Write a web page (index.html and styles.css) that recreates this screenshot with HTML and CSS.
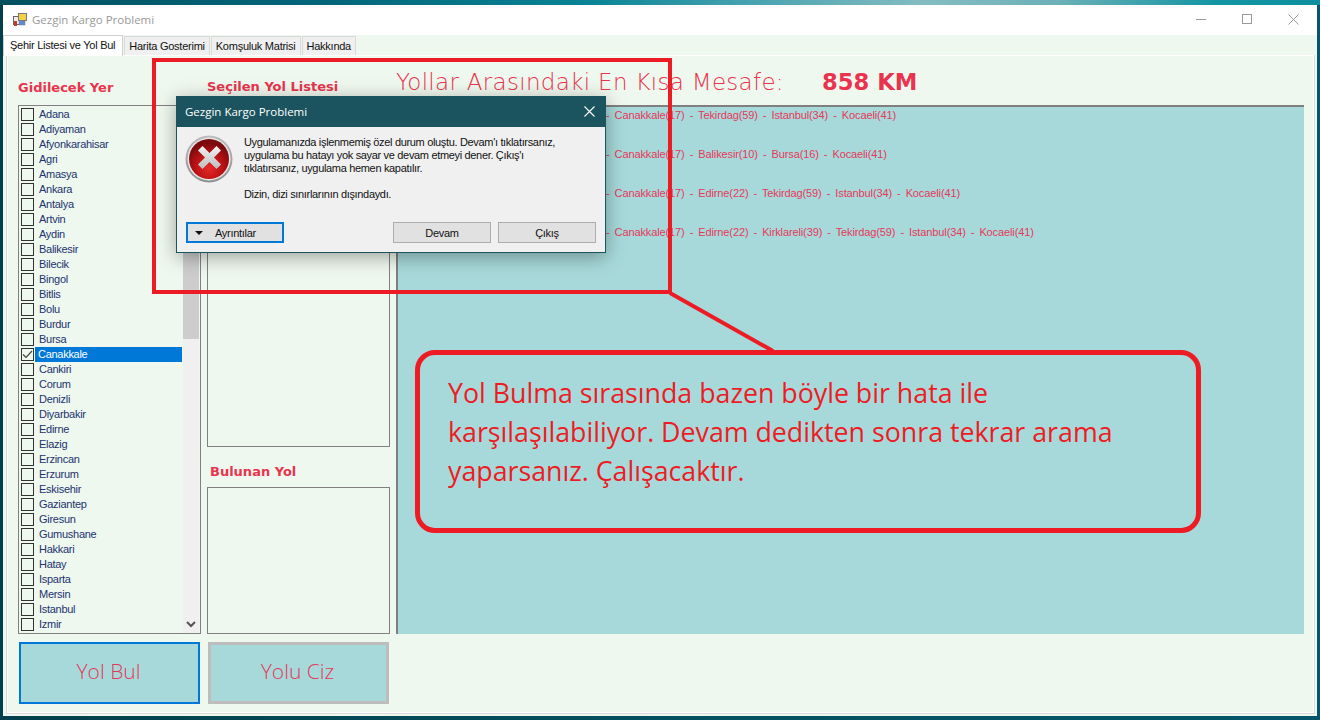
FILE: index.html
```html
<!DOCTYPE html>
<html lang="tr">
<head>
<meta charset="utf-8">
<title>Gezgin Kargo Problemi</title>
<link rel="stylesheet" href="styles.css">
</head>
<body>
<div class="desktop">
  <div class="window">
    <div class="titlebar">
      <svg class="appicon" width="14" height="14" viewBox="0 0 14 14"><rect x="0.5" y="3.5" width="7" height="8" fill="#eee" stroke="#666"/><rect x="5.5" y="0.5" width="8" height="7" fill="#f3d24a" stroke="#777"/><rect x="1" y="8" width="3" height="5" fill="#c8372d"/><rect x="6" y="8" width="6" height="4" fill="#5b8ed8" stroke="#777" stroke-width="0.5"/></svg>
      <span class="wintitle">Gezgin Kargo Problemi</span>
      <div class="controls">
        <svg width="11" height="11" viewBox="0 0 11 11"><path d="M0 5.5H10" stroke="#999" fill="none"/></svg>
        <svg width="11" height="11" viewBox="0 0 11 11"><rect x="0.5" y="0.5" width="9" height="9" stroke="#999" fill="none"/></svg>
        <svg width="11" height="11" viewBox="0 0 11 11"><path d="M0.5 0.5L10.5 10.5M10.5 0.5L0.5 10.5" stroke="#999" fill="none"/></svg>
      </div>
    </div>
    <div class="tabs">
      <div class="tab active">Şehir Listesi ve Yol Bul</div>
      <div class="tab">Harita Gosterimi</div>
      <div class="tab">Komşuluk Matrisi</div>
      <div class="tab">Hakkında</div>
    </div>
    <div class="panel">
      <div class="col col-left">
        <div class="heading">Gidilecek Yer</div>
        <div class="citybox">
          <ul class="cities">
            <li><i class="cb"></i><span>Adana</span></li>
            <li><i class="cb"></i><span>Adiyaman</span></li>
            <li><i class="cb"></i><span>Afyonkarahisar</span></li>
            <li><i class="cb"></i><span>Agri</span></li>
            <li><i class="cb"></i><span>Amasya</span></li>
            <li><i class="cb"></i><span>Ankara</span></li>
            <li><i class="cb"></i><span>Antalya</span></li>
            <li><i class="cb"></i><span>Artvin</span></li>
            <li><i class="cb"></i><span>Aydin</span></li>
            <li><i class="cb"></i><span>Balikesir</span></li>
            <li><i class="cb"></i><span>Bilecik</span></li>
            <li><i class="cb"></i><span>Bingol</span></li>
            <li><i class="cb"></i><span>Bitlis</span></li>
            <li><i class="cb"></i><span>Bolu</span></li>
            <li><i class="cb"></i><span>Burdur</span></li>
            <li><i class="cb"></i><span>Bursa</span></li>
            <li class="selected"><i class="cb"><svg width="11" height="11" viewBox="0 0 11 11"><path d="M1 5.5L4 8.5L10 2" stroke="#444" stroke-width="1.2" fill="none"/></svg></i><span>Canakkale</span></li>
            <li><i class="cb"></i><span>Cankiri</span></li>
            <li><i class="cb"></i><span>Corum</span></li>
            <li><i class="cb"></i><span>Denizli</span></li>
            <li><i class="cb"></i><span>Diyarbakir</span></li>
            <li><i class="cb"></i><span>Edirne</span></li>
            <li><i class="cb"></i><span>Elazig</span></li>
            <li><i class="cb"></i><span>Erzincan</span></li>
            <li><i class="cb"></i><span>Erzurum</span></li>
            <li><i class="cb"></i><span>Eskisehir</span></li>
            <li><i class="cb"></i><span>Gaziantep</span></li>
            <li><i class="cb"></i><span>Giresun</span></li>
            <li><i class="cb"></i><span>Gumushane</span></li>
            <li><i class="cb"></i><span>Hakkari</span></li>
            <li><i class="cb"></i><span>Hatay</span></li>
            <li><i class="cb"></i><span>Isparta</span></li>
            <li><i class="cb"></i><span>Mersin</span></li>
            <li><i class="cb"></i><span>Istanbul</span></li>
            <li><i class="cb"></i><span>Izmir</span></li>
          </ul>
          <div class="scrollbar">
            <div class="thumb"></div>
            <svg class="arrow" width="10" height="7" viewBox="0 0 10 7"><path d="M1 1L5 5L9 1" stroke="#555" stroke-width="2" fill="none"/></svg>
          </div>
        </div>
        <button class="bigbtn focus">Yol Bul</button>
      </div>
      <div class="col col-mid">
        <div class="heading">Seçilen Yol Listesi</div>
        <div class="box box-top"></div>
        <div class="heading heading-found">Bulunan Yol</div>
        <div class="box box-bottom"></div>
        <button class="bigbtn plain">Yolu Ciz</button>
      </div>
      <div class="col col-right">
        <div class="summary">
          <span class="sumlabel">Yollar Arasındaki En Kısa Mesafe:</span>
          <span class="sumvalue">858 KM</span>
        </div>
        <div class="results">
          <div class="route">-&nbsp; Canakkale(17) &nbsp;-&nbsp; Tekirdag(59) &nbsp;-&nbsp; Istanbul(34) &nbsp;-&nbsp; Kocaeli(41)</div>
          <div class="route">-&nbsp; Canakkale(17) &nbsp;-&nbsp; Balikesir(10) &nbsp;-&nbsp; Bursa(16) &nbsp;-&nbsp; Kocaeli(41)</div>
          <div class="route">-&nbsp; Canakkale(17) &nbsp;-&nbsp; Edirne(22) &nbsp;-&nbsp; Tekirdag(59) &nbsp;-&nbsp; Istanbul(34) &nbsp;-&nbsp; Kocaeli(41)</div>
          <div class="route">-&nbsp; Canakkale(17) &nbsp;-&nbsp; Edirne(22) &nbsp;-&nbsp; Kirklareli(39) &nbsp;-&nbsp; Tekirdag(59) &nbsp;-&nbsp; Istanbul(34) &nbsp;-&nbsp; Kocaeli(41)</div>
        </div>
      </div>
    </div>
  </div>

  <div class="dialog">
    <div class="dlgtitle">
      <span>Gezgin Kargo Problemi</span>
      <svg width="11" height="11" viewBox="0 0 11 11"><path d="M0.5 0.5L10.5 10.5M10.5 0.5L0.5 10.5" stroke="#fff" stroke-width="1.1" fill="none"/></svg>
    </div>
    <div class="dlgbody">
      <div class="dlgmain">
        <svg class="erricon" width="48" height="48" viewBox="0 0 48 48">
          <defs>
            <radialGradient id="red" cx="50%" cy="72%" r="62%"><stop offset="0" stop-color="#e62a28"/><stop offset="0.55" stop-color="#bb1214"/><stop offset="1" stop-color="#7a0b0e"/></radialGradient>
            <linearGradient id="ring" x1="0" y1="0" x2="0" y2="1"><stop offset="0" stop-color="#bdbdbd"/><stop offset="1" stop-color="#8f8f8f"/></linearGradient>
            <linearGradient id="xg" x1="0" y1="0" x2="0" y2="1"><stop offset="0" stop-color="#f2f2f2"/><stop offset="1" stop-color="#bdbdbd"/></linearGradient>
          </defs>
          <circle cx="24" cy="24" r="23.5" fill="url(#ring)"/>
          <circle cx="24" cy="24" r="21.5" fill="#e6e6e6"/>
          <circle cx="24" cy="24" r="20" fill="url(#red)"/>
          <path d="M17.500 11L24.500 18L31.500 11L36 15.500L29 22.500L36 29.500L31.500 34L24.500 27L17.500 34L13 29.500L20 22.500L13 15.500Z" fill="url(#xg)"/>
        </svg>
        <div class="dlgtext">
          <p>Uygulamanızda işlenmemiş özel durum oluştu. Devam'ı tıklatırsanız,<br>uygulama bu hatayı yok sayar ve devam etmeyi dener. Çıkış'ı<br>tıklatırsanız, uygulama hemen kapatılır.</p>
          <p>Dizin, dizi sınırlarının dışındaydı.</p>
        </div>
      </div>
      <div class="dlgbtns">
        <button class="dbtn details"><i class="tri"></i>Ayrıntılar</button>
        <span class="spacer"></span>
        <button class="dbtn">Devam</button>
        <button class="dbtn">Çıkış</button>
      </div>
    </div>
  </div>

  <svg class="marks" width="1320" height="720" viewBox="0 0 1320 720">
    <rect x="154" y="60" width="516" height="232" fill="none" stroke="#ed1c24" stroke-width="4"/>
    <path d="M670 293L773 351" stroke="#ed1c24" stroke-width="4" fill="none"/>
  </svg>

  <div class="note">Yol Bulma sırasında bazen böyle bir hata ile karşılaşılabiliyor. Devam dedikten sonra tekrar arama yaparsanız. Çalışacaktır.</div>
</div>
</body>
</html>
```

FILE: styles.css
```css
* { box-sizing: border-box; }
html, body { margin: 0; padding: 0; }
body { width: 1320px; height: 720px; overflow: hidden; font-family: "Liberation Sans", Arial, sans-serif; }
p { margin: 0; }

.desktop {
  position: relative;
  width: 1320px;
  height: 720px;
  padding: 5px 3px 4px;
  background:
    linear-gradient(90deg, #03505f 0%, #04657a 25%, #0a8496 45%, #3f9eac 55%, #85bcc3 70%, #6db0b8 80%, #1495a3 92%, #0d8fa0 100%) top / 100% 5px no-repeat,
    linear-gradient(90deg, #023f4c 0%, #04505e 50%, #05566b 100%);
}
.window { display: flex; flex-direction: column; height: 100%; background: #eff8ee; }

.titlebar { display: flex; align-items: center; height: 30px; padding: 0 0 1px 10px; background: #fff; flex: none; }
.appicon { flex: none; }
.wintitle { margin-left: 5px; font: 11.5px "Open Sans", sans-serif; color: #999; }
.controls { margin-left: auto; display: flex; align-items: center; gap: 35px; padding-right: 18px; }

.tabs { display: flex; align-items: flex-end; height: 20px; flex: none; background: #eff8ee; position: relative; z-index: 1; }
.tab { height: 19px; padding: 0 4px; margin-left: 1px; font-size: 11px; letter-spacing: -0.25px; line-height: 18px; color: #111; background: #f0f0f0; border: 1px solid #d9d9d9; border-bottom: 0; white-space: nowrap; }
.tab.active { height: 21px; margin-left: 0; margin-bottom: -1px; padding: 0 7px 0 6px; background: #fff; border-color: #d0d0d0; line-height: 19px; }

.panel {
  flex: 1;
  display: grid;
  grid-template-columns: 183px 183px 908px;
  column-gap: 6px;
  margin: 0 3px 3px 4px;
  padding: 0 9px 0 10px;
  border: 1px solid #fff;
  outline: 1px solid #d9d9d9;
  background: #eff8ee;
  min-height: 0;
}
.col { display: flex; flex-direction: column; min-height: 0; }

.heading { height: 49px; padding-top: 23px; font: bold 13px/18px "DejaVu Sans", sans-serif; color: #e8344e; }
.col-mid .heading { padding: 22px 0 0; }
.col-mid .heading-found { height: 40px; padding: 16px 0 0 3px; }

.citybox { display: flex; height: 529px; border: 1px solid #808080; background: #eff8ee; flex: none; }
.cities { list-style: none; margin: 0; padding: 1px 0 0 2px; flex: 1; min-width: 0; }
.cities li { display: flex; align-items: center; height: 15px; font-size: 11px; letter-spacing: -0.28px; color: #22336f; }
.cb { display: flex; width: 13px; height: 13px; flex: none; border: 1px solid #333; margin-right: 1px; align-items: center; justify-content: center; }
.cb svg { flex: none; }
.cities li span { display: block; flex: 1; padding-left: 4px; margin-right: 1px; line-height: 15px; }
.cities li.selected span { padding-left: 3px; background: #0078d7; color: #fff; }

.scrollbar { position: relative; width: 16px; margin-right: 1px; background: #f0f0f0; flex: none; }
.thumb { height: 217px; margin-top: 16px; background: #cdcdcd; }
.arrow { position: absolute; left: 3px; bottom: 5px; }

.bigbtn { display: block; height: 62px; margin-top: 8px; flex: none; padding: 0 2px 4px 0; font: 300 21px "Open Sans", sans-serif; color: #e23a5a; background: #a8d9da; width: 181px; margin-left: 1px; }
.bigbtn.focus { border: 2px solid #0078d7; }
.bigbtn.plain { border: 3px solid #bdbdbd; }

.box { border: 1px solid #808080; background: #eff8ee; flex: none; }
.box-top { height: 342px; }
.box-bottom { height: 147px; }

.summary { display: flex; align-items: baseline; height: 49px; padding-top: 13px; color: #e8344e; }
.sumlabel { font: 200 23px "DejaVu Sans", sans-serif; letter-spacing: 0.3px; white-space: nowrap; }
.sumvalue { font: bold 22.7px "DejaVu Sans", sans-serif; margin-left: 38px; white-space: nowrap; }

.results { height: 529px; background: #a8d9da; border-top: 2px solid #7f7f7f; border-left: 2px solid #7f7f7f; padding: 1px 0 0 208px; }
.route { height: 39px; line-height: 15px; font-size: 11px; letter-spacing: -0.12px; word-spacing: -0.4px; color: #e23a5a; white-space: pre; }

.dialog {
  position: absolute; left: 176px; top: 96px; width: 430px; height: 157px;
  display: flex; flex-direction: column;
  border: 1px solid #1b545e;
  background: #f0f0f0;
  box-shadow: 0 4px 18px rgba(0,0,0,.35);
  font-size: 11px; letter-spacing: -0.33px; color: #111;
}
.dlgtitle { display: flex; align-items: center; justify-content: space-between; height: 30px; flex: none; padding: 0 10px 1px 8px; background: #1b545e; color: #fff; font: 11.5px "Open Sans", sans-serif; letter-spacing: 0; }
.dlgbody { flex: 1; display: flex; flex-direction: column; padding: 8px 9px 9px 8px; }
.dlgmain { display: flex; flex: 1; }
.erricon { flex: none; }
.dlgtext { margin-left: 11px; padding-top: 1px; }
.dlgtext p { line-height: 13px; white-space: nowrap; margin-bottom: 13px; }
.dlgbtns { display: flex; gap: 7px; }
.spacer { flex: 1; }
.dbtn { width: 98px; height: 21px; padding: 0; font: 11px "Liberation Sans", sans-serif; letter-spacing: -0.3px; color: #111; background: #e1e1e1; border: 1px solid #adadad; }
.dbtn.details { display: flex; align-items: center; border: 2px solid #0078d7; padding-left: 7px; margin-left: 1px; }
.tri { width: 0; height: 0; border: 4px solid transparent; border-top: 4px solid #111; border-bottom: 0; margin-right: 12px; }

.marks { position: absolute; left: 0; top: 0; pointer-events: none; }
.note {
  position: absolute; left: 415px; top: 350px; width: 786px; height: 183px;
  border: 5px solid #ed1c24; border-radius: 20px;
  padding: 18px 50px 19px 28px;
  font: 26.75px/39px "Open Sans", sans-serif; color: #ed1c24;
}
```
